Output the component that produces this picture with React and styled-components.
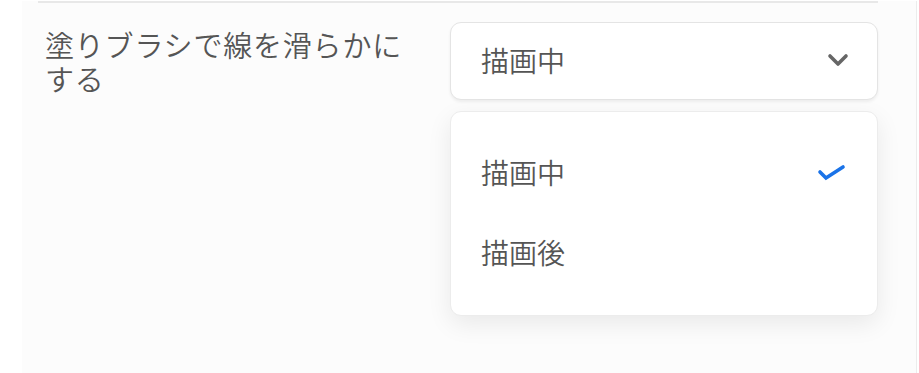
import styled, { createGlobalStyle } from "styled-components";

const GlobalStyle = createGlobalStyle`
    html, body {
        margin: 0;
        padding: 0;
        background: #ffffff;
        font-family: "Noto Sans CJK JP", "Noto Sans", sans-serif;
    }
`;

const Pagina = styled.div`
    width: 919px;
    height: 373px;
    padding-left: 22px;
    box-sizing: border-box;
    background: #ffffff;
    overflow: hidden;
`;

const Panel = styled.div`
    width: 895px;
    height: 100%;
    background: #fcfcfc;
    border-right: 1px solid #ececec;
    box-sizing: border-box;
    padding: 0 38px 0 16px;
`;

const Divisor = styled.div`
    height: 2px;
    margin-top: 1px;
    background: #e8e8e8;
`;

const Fila = styled.div`
    display: flex;
    justify-content: space-between;
    align-items: flex-start;
    padding-top: 19px;
`;

const Etiqueta = styled.p`
    margin: 5px 0 0 7px;
    width: 378px;
    font-size: 29px;
    font-weight: 350;
    letter-spacing: 0.8px;
    line-height: 34px;
    color: #555555;
`;

const Columna = styled.div`
    display: flex;
    flex-direction: column;
    gap: 11px;
    width: 428px;
`;

const Selector = styled.div`
    height: 78px;
    box-sizing: border-box;
    border: 1px solid #e4e4e4;
    border-radius: 11px;
    background: #ffffff;
    box-shadow: 0 2px 3px rgba(0, 0, 0, 0.06);
    display: flex;
    align-items: center;
    justify-content: space-between;
    padding: 0 28px 2px 30px;
`;

const Texto = styled.span`
    font-size: 28px;
    font-weight: 350;
    color: ${props => props.color ? props.color : '#555555'};
`;

const Menu = styled.div`
    background: #ffffff;
    border-radius: 11px;
    border: 1px solid #ececec;
    box-shadow: 0 8px 24px rgba(0, 0, 0, 0.08);
    padding: 20px 0 23px;
`;

const Opcion = styled.div`
    height: 80px;
    display: flex;
    align-items: center;
    justify-content: space-between;
    padding: 0 30px 0 30px;
`;

const Chevron = () => (
    <svg width="22" height="14" viewBox="0 0 22 14">
        <path d="M3 3 L11 11 L19 3" fill="none" stroke="#666666" strokeWidth="3.6" strokeLinecap="round" strokeLinejoin="round" />
    </svg>
);

const Check = () => (
    <svg width="30" height="22" viewBox="0 0 30 22">
        <path d="M3 11 L9 17 L26 6" fill="none" stroke="#1a73e8" strokeWidth="3.6" strokeLinecap="round" strokeLinejoin="miter" />
    </svg>
);

const opciones = ['描画中', '描画後'];

export default function App() {
    const seleccion = '描画中';
    return (
        <>
            <GlobalStyle />
            <Pagina>
                <Panel>
                    <Divisor />
                    <Fila>
                        <Etiqueta>塗りブラシで線を滑らかにする</Etiqueta>
                        <Columna>
                            <Selector>
                                <Texto>{seleccion}</Texto>
                                <Chevron />
                            </Selector>
                            <Menu>
                                {opciones.map(op => (
                                    <Opcion key={op}>
                                        <Texto>{op}</Texto>
                                        {op === seleccion && <Check />}
                                    </Opcion>
                                ))}
                            </Menu>
                        </Columna>
                    </Fila>
                </Panel>
            </Pagina>
        </>
    );
}
